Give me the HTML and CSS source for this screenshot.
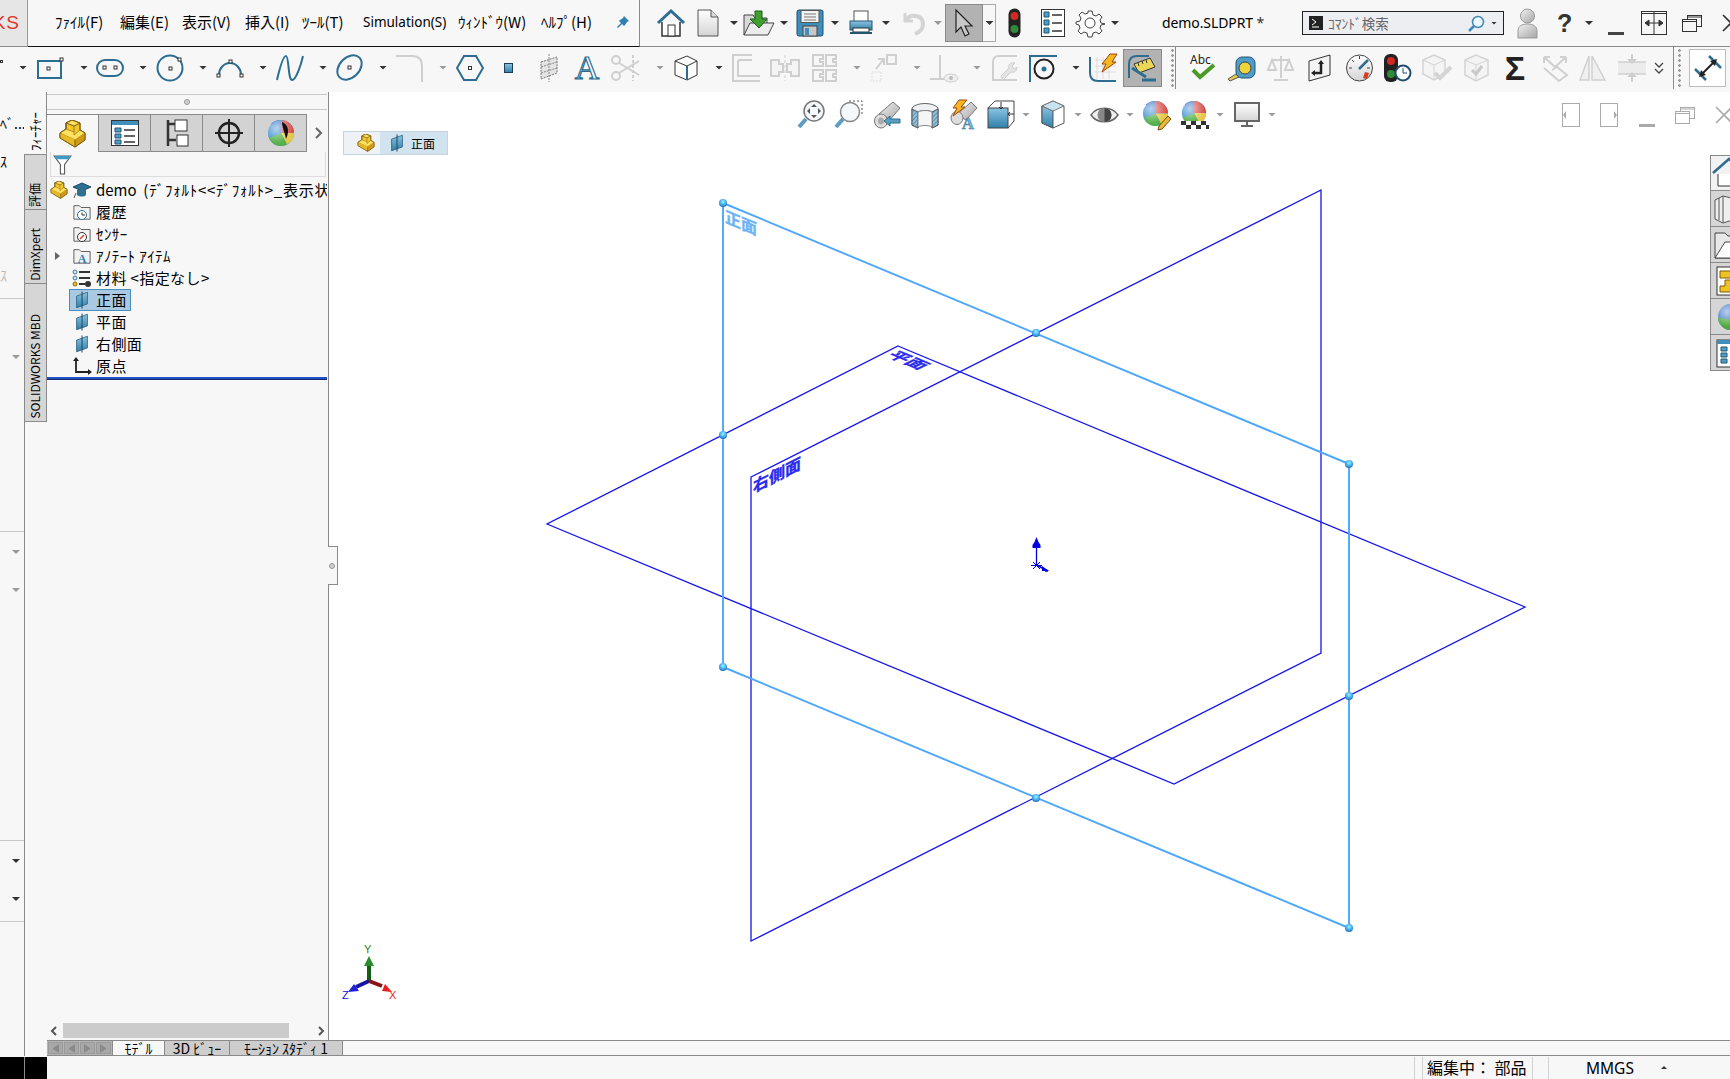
FILE: index.html
```html
<!DOCTYPE html>
<html lang="ja">
<head>
<meta charset="utf-8">
<title>demo.SLDPRT</title>
<link rel="stylesheet" href="styles.css">
</head>
<body>
<svg class="defs" width="0" height="0" aria-hidden="true">
  <defs>
    <linearGradient id="gBlue" x1="0" y1="0" x2="0" y2="1"><stop offset="0" stop-color="#8cc4e4"/><stop offset="1" stop-color="#2f7fa8"/></linearGradient>
    <linearGradient id="gFace" x1="0" y1="0" x2="0" y2="1"><stop offset="0" stop-color="#ffffff"/><stop offset="1" stop-color="#d4d4d4"/></linearGradient>
    <linearGradient id="gMetal" x1="0" y1="0" x2="1" y2="1"><stop offset="0" stop-color="#f2f2f2"/><stop offset="1" stop-color="#a5a5a5"/></linearGradient>
    <radialGradient id="gDot" cx=".5" cy=".35" r=".7"><stop offset="0" stop-color="#9ff0ff"/><stop offset=".6" stop-color="#3aa6ea"/><stop offset="1" stop-color="#1b5f9c"/></radialGradient>
    <radialGradient id="gShine" cx=".35" cy=".3" r=".6"><stop offset="0" stop-color="#fff" stop-opacity=".65"/><stop offset="1" stop-color="#fff" stop-opacity="0"/></radialGradient>
    <pattern id="hatch" width="3" height="3" patternUnits="userSpaceOnUse" patternTransform="rotate(45)"><rect width="3" height="3" fill="#8fc0da"/><path d="M0 0v3" stroke="#2d6d92"/></pattern>
    <symbol id="part" viewBox="0 0 27 28">
      <path d="M1 13 7 9V3l6-3 8 3v7l5 3v7l-10 7L1 18Z" fill="#f3c62b" stroke="#7d5f10"/>
      <path d="M7 3l6-3 8 3-6 3Z" fill="#ffe060" stroke="#7d5f10" stroke-width=".6"/>
      <path d="M1 13l6-4 8 3v3l6-5 5 3-10 7Z" fill="#ffe060" stroke="#7d5f10" stroke-width=".6"/>
      <path d="M1 13l15 7v7L1 18Z" fill="#e9b825"/>
      <path d="M16 20l10-7v7l-10 7Z" fill="#d09a18"/>
      <path d="M7 9V3l8 3v6M15 6l6-3" fill="none" stroke="#7d5f10" stroke-width=".7"/>
      <path d="M1 13 7 9V3l6-3 8 3v7l5 3v7l-10 7L1 18ZM16 20v7" fill="none" stroke="#7d5f10"/>
    </symbol>
    <symbol id="plane" viewBox="0 0 18 22">
      <path d="M2 6 16 1v15L2 21Z" fill="url(#gBlue)" stroke="#2a5f7e"/>
      <path d="M9 0v22" stroke="#1d3d50" stroke-width="1.2"/>
    </symbol>
    <symbol id="folder" viewBox="0 0 20 20">
      <path d="M1 18V3h6l2 2h10v13Z" fill="#f2f2f2" stroke="#555"/>
    </symbol>
    <symbol id="ball" viewBox="0 0 28 28">
      <circle cx="14" cy="14" r="13" fill="#3f8fd0"/>
      <path d="M14 14 4 5A13 13 0 0 1 14 1Z" fill="#3c78c8"/>
      <path d="M14 14V1A13 13 0 0 1 27 14Z" fill="#d8504a"/>
      <path d="M14 14H27A13 13 0 0 1 20 25.5Z" fill="#e6c84a"/>
      <path d="M14 14 20 25.5A13 13 0 0 1 2 19Z" fill="#55b04a"/>
      <circle cx="14" cy="14" r="13" fill="url(#gShine)"/>
    </symbol>
  </defs>
</svg>

<div class="top">
  <div class="logo"><span class="logo-t">KS</span></div>
  <nav class="menu">
    <span class="mi">ﾌｧｲﾙ(F)</span><span class="mi">編集(E)</span><span class="mi">表示(V)</span><span class="mi">挿入(I)</span><span class="mi">ﾂｰﾙ(T)</span><span class="mi mi-s">Simulation(S)</span><span class="mi">ｳｨﾝﾄﾞｳ(W)</span><span class="mi">ﾍﾙﾌﾟ(H)</span>
    <svg class="pin" width="14" height="14" viewBox="0 0 14 14"><path d="M8 1l5 5-2 1-2 3-1 1-2-2-4 4-1-1 4-4-2-2 1-1 3-2Z" fill="#2f7fb5"/></svg>
  </nav>
  <div class="tools t1">
    <svg class="i m17" width="28" height="28" viewBox="0 0 28 28"><path d="M5 13v14h18V13" fill="#fff" stroke="#333" stroke-width="1.5"/><rect x="11" y="16" width="7" height="11" fill="#fff" stroke="#333"/><path d="M1 14 14 2l13 12" fill="none" stroke="#2d6d92" stroke-width="3"/></svg>
    <svg class="i m12" width="22" height="28" viewBox="0 0 22 28"><path d="M1 1h13l7 7v19H1Z" fill="url(#gFace)" stroke="#555"/><path d="M14 1v7h7" fill="#ddd" stroke="#555"/></svg>
    <i class="c m10"></i>
    <svg class="i m4" width="32" height="28" viewBox="0 0 32 28"><path d="M1 26V6h9l2 3h12v5" fill="#d9d9d9" stroke="#444"/><path d="M1 26 7 14h24l-6 12Z" fill="#ececec" stroke="#444"/><path d="M12 2h7v8h5l-8 9-9-9h5Z" fill="#3fa02f" stroke="#1f5e16"/></svg>
    <i class="c m4"></i>
    <svg class="i m7" width="28" height="28" viewBox="0 0 28 28"><rect x="1" y="1" width="26" height="26" rx="2" fill="#3f8fbd" stroke="#1f4f6e"/><rect x="5" y="1.500" width="18" height="12" fill="#f4f4f4" stroke="#555"/><path d="M8 5h12M8 8h12M8 11h12" stroke="#777"/><rect x="7" y="17" width="14" height="10" fill="#c8c8c8" stroke="#444"/><rect x="9" y="19" width="4" height="7" fill="#3f8fbd"/></svg>
    <i class="c m6"></i>
    <svg class="i m9" width="24" height="28" viewBox="0 0 24 28"><rect x="5" y="2" width="14" height="11" fill="#fff" stroke="#555"/><rect x="1" y="12" width="22" height="9" fill="url(#gBlue)" stroke="#23566f"/><rect x="4" y="19" width="16" height="4" fill="#fff" stroke="#333"/><path d="M1 24h22" stroke="#23566f" stroke-width="2"/></svg>
    <i class="c m8"></i>
    <svg class="i m8" width="26" height="28" viewBox="0 0 26 28"><path d="M6 4v8h8" fill="none" stroke="#d4d4d4" stroke-width="3"/><path d="M7 11C12 4 24 6 24 15c0 5-3 8-8 10" fill="none" stroke="#d4d4d4" stroke-width="4"/></svg>
    <i class="c cg m8"></i>
    <div class="sel-tool m2">
      <div class="sel-main"><svg width="24" height="34" viewBox="0 0 24 34"><path d="M4 4v22l5-5 4 9 4-2-4-8h7Z" fill="#c8c8c8" stroke="#222" stroke-width="1.2"/></svg></div>
      <div class="sel-drop"><i class="c"></i></div>
    </div>
    <svg class="i m12" width="13" height="30" viewBox="0 0 13 30"><rect x=".5" y=".5" width="12" height="29" rx="6" fill="#222"/><circle cx="6.500" cy="8" r="4" fill="#d02a22"/><circle cx="6.500" cy="21" r="4" fill="#2f8a3a"/></svg>
    <svg class="i m20" width="24" height="28" viewBox="0 0 24 28"><rect x=".5" y=".5" width="23" height="27" fill="#fff" stroke="#333"/><path d="M3 3h5v5H3ZM3 11h5v5H3ZM3 19h5v5H3Z" fill="#4d9cc9" stroke="#23566f"/><path d="M11 6h10M11 14h10M11 22h10" stroke="#333" stroke-width="1.500"/></svg>
    <svg class="i m11" width="28" height="28" viewBox="0 0 28 28"><path d="M12 2h4l1 4 3 1 3-2 3 3-2 3 1 3 4 1v0l-4 1-1 3 2 3-3 3-3-2-3 1-1 4h-4l-1-4-3-1-3 2-3-3 2-3-1-3-3-1v-2l4-1 1-3-2-3 3-3 3 2 3-1Z" fill="#fafafa" stroke="#444"/><circle cx="14" cy="14" r="5" fill="#fff" stroke="#444"/></svg>
    <i class="c m6"></i>
    <span class="doc">demo.SLDPRT <span class="star">*</span></span>
    <div class="search">
      <svg width="14" height="14" viewBox="0 0 14 14"><rect width="14" height="14" fill="#222"/><path d="M3 3l4 3-4 3M3 11h7" stroke="#fff" fill="none"/></svg>
      <span class="search-t">ｺﾏﾝﾄﾞ検索</span>
      <svg class="sr-g" width="17" height="17" viewBox="0 0 17 17"><circle cx="10" cy="7" r="5.500" fill="#eef8ff" stroke="#3e8bb8" stroke-width="1.500"/><path d="M6 11l-5 5" stroke="#3e8bb8" stroke-width="2.500"/></svg>
      <i class="c cs"></i>
    </div>
    <svg class="i m13" width="21" height="31" viewBox="0 0 21 31"><circle cx="10.500" cy="8" r="7" fill="url(#gMetal)" stroke="#999"/><path d="M1 30v-7c0-5 4-7 9.500-7S20 18 20 23v7Z" fill="url(#gMetal)" stroke="#999"/></svg>
    <span class="help">?</span>
    <i class="c m13"></i>
    <span class="bar16 m14"></span>
    <svg class="i m17" width="26" height="24" viewBox="0 0 26 24"><rect x=".5" y=".5" width="25" height="23" fill="none" stroke="#333"/><path d="M.5 2.500h25" stroke="#333"/><path d="M13 1v22" stroke="#333"/><path d="M8 12l0 0M5 12h16M8 9l-4 3 4 3ZM18 9l4 3-4 3Z" stroke="#333" fill="#333"/></svg>
    <svg class="i m15" width="20" height="18" viewBox="0 0 20 18"><rect x="5.500" y="1.500" width="14" height="11" fill="none" stroke="#333"/><rect x=".5" y="5.500" width="14" height="12" fill="#f7f7f7" stroke="#333"/><path d="M.5 7.500h14M5.500 3h14" stroke="#333"/></svg>
    <svg class="i m20" width="18" height="18" viewBox="0 0 18 18"><path d="M1 1l16 16M17 1 1 17" stroke="#333" stroke-width="1.600"/></svg>
  </div>
</div>

<div class="tools t2">
  <span class="hnd"></span>
  <i class="c m15"></i>
  <svg class="i m9" width="27" height="22" viewBox="0 0 27 22"><rect x="1" y="4" width="23" height="17" fill="none" stroke="#2d6d92" stroke-width="2"/><rect x="10" y="10" width="3" height="3" class="h"/><rect x="23" y="1" width="3" height="3" class="h"/></svg>
  <i class="c m15"></i>
  <svg class="i m7" width="28" height="20" viewBox="0 0 28 20"><rect x="1" y="2" width="26" height="16" rx="8" fill="none" stroke="#2d6d92" stroke-width="2"/><rect x="7" y="8" width="3" height="3" class="h"/><rect x="18" y="8" width="3" height="3" class="h"/></svg>
  <i class="c m14"></i>
  <svg class="i m8" width="28" height="28" viewBox="0 0 28 28"><ellipse cx="14" cy="14" rx="12.500" ry="12.500" fill="none" stroke="#2d6d92" stroke-width="2"/><rect x="13" y="13" width="3" height="3" class="h"/><rect x="22" y="4" width="3" height="3" class="h"/></svg>
  <i class="c m14"></i>
  <svg class="i m8" width="28" height="22" viewBox="0 0 28 22"><path d="M3 18A11 12 0 0 1 25 18" fill="none" stroke="#2d6d92" stroke-width="2"/><rect x="13" y="3" width="3" height="3" class="h"/><rect x="1" y="17" width="3" height="3" class="h"/><rect x="24" y="17" width="3" height="3" class="h"/></svg>
  <i class="c m14"></i>
  <svg class="i m8" width="28" height="26" viewBox="0 0 28 26"><path d="M1 25C4 12 7 1 10 1s2 24 6 24S25 10 27 1" fill="none" stroke="#2d6d92" stroke-width="2"/></svg>
  <i class="c m14"></i>
  <svg class="i m8" width="27" height="27" viewBox="0 0 27 27"><ellipse cx="13.500" cy="13.500" rx="14" ry="10" transform="rotate(-45 13.500 13.500)" fill="none" stroke="#2d6d92" stroke-width="2"/><rect x="12" y="12" width="3" height="3" class="h"/></svg>
  <i class="c m15"></i>
  <svg class="i m8" width="28" height="28" viewBox="0 0 28 28"><path d="M0 2h16q10 0 10 10v16" fill="none" stroke="#cfcfcf" stroke-width="2"/></svg>
  <i class="c cg m14"></i>
  <svg class="i m8" width="28" height="26" viewBox="0 0 28 26"><path d="M1 13 8 1h12l7 12-7 12H8Z" fill="none" stroke="#2d6d92" stroke-width="2"/><rect x="12.500" y="11.500" width="3" height="3" class="h"/></svg>
  <svg class="i m20" width="9" height="10" viewBox="0 0 9 10"><rect x=".5" y=".5" width="8" height="9" fill="url(#gBlue)" stroke="#1e3e52"/></svg>
  <svg class="i m27" width="18" height="28" viewBox="0 0 18 28"><path d="M1 8 17 3v16L1 25Z" fill="#e4e4e4" stroke="#777" stroke-dasharray="2 1"/><path d="M9 0v28M1 13l16-5M1 19l16-5" stroke="#888" stroke-dasharray="2 1"/></svg>
  <svg class="i m15" width="28" height="28" viewBox="0 0 28 28"><text class="bigA" x="14" y="25" text-anchor="middle">A</text></svg>
  <svg class="i m10" width="28" height="28" viewBox="0 0 28 28"><g fill="none" stroke="#cfcfcf" stroke-width="2"><circle cx="5" cy="6" r="4"/><circle cx="5" cy="22" r="4"/><path d="M8 9l20 12M8 19 28 7"/><path d="M22 1v26" stroke-dasharray="3 2"/></g></svg>
  <i class="c cg m16"></i>
  <svg class="i m9" width="24" height="26" viewBox="0 0 24 26"><path d="M1 6 13 1l10 5v14l-10 5L1 20Z" fill="#fff" stroke="#333"/><path d="M1 6l12 5 10-5" fill="none" stroke="#333"/><path d="M13 11v14" stroke="#2d6d92" stroke-width="2"/></svg>
  <i class="c m16"></i>
  <svg class="i m8" width="28" height="28" viewBox="0 0 28 28"><g fill="none" stroke="#cfcfcf" stroke-width="2"><path d="M20 1H1v26h27"/><path d="M20 6H8q-2 0-2 2v14h22"/></g></svg>
  <svg class="i m10" width="30" height="26" viewBox="0 0 30 26"><g fill="#f4f4f4" stroke="#cfcfcf" stroke-width="2"><path d="M1 5h8v4h4v8H9v4H1Z"/><path d="M29 5h-8v4h-4v8h4v4h8Z"/></g><path d="M15 0v26" stroke="#cfcfcf" stroke-dasharray="3 2"/></svg>
  <svg class="i m12" width="25" height="28" viewBox="0 0 25 28"><g fill="none" stroke="#cfcfcf" stroke-width="2"><path d="M1 1h10v4h-3v3h3v4H1Z"/><path d="M14 1h10v4h-3v3h3v4H14Z"/><path d="M1 16h10v4H8v3h3v4H1Z"/><path d="M14 16h10v4h-3v3h3v4H14Z"/></g></svg>
  <i class="c cg m15"></i>
  <svg class="i m9" width="26" height="28" viewBox="0 0 26 28"><rect x="16" y="1" width="9" height="9" fill="none" stroke="#cfcfcf" stroke-width="2"/><rect x="1" y="18" width="9" height="9" fill="none" stroke="#ddd" stroke-dasharray="2 1"/><path d="M5 15 12 6M7 5h6v6" fill="none" stroke="#cfcfcf" stroke-width="2"/></svg>
  <i class="c cg m15"></i>
  <svg class="i m8" width="28" height="28" viewBox="0 0 28 28"><path d="M10 1v24M0 25h28" stroke="#cfcfcf" stroke-width="2"/><ellipse cx="21" cy="24" rx="7" ry="4" fill="#eee" stroke="#cfcfcf"/><circle cx="21" cy="24" r="2" fill="#bbb"/></svg>
  <i class="c cg m14"></i>
  <svg class="i m9" width="26" height="28" viewBox="0 0 26 28"><path d="M26 2H8Q2 2 2 8v18h24" fill="none" stroke="#cfcfcf" stroke-width="2"/><path d="M10 22l8-8c-1-4 2-6 6-5l-3 3 2 3 3-2c0 4-3 6-6 5l-8 8Z" fill="#e4e4e4" stroke="#cfcfcf"/></svg>
  <svg class="i m12" width="28" height="28" viewBox="0 0 28 28"><path d="M1 28V2h27" fill="none" stroke="#2d6d92" stroke-width="2"/><circle cx="15" cy="15" r="9.500" fill="none" stroke="#222" stroke-width="2"/><circle cx="15" cy="15" r="2.500" fill="#2d6d92"/></svg>
  <i class="c m14"></i>
  <svg class="i m8" width="28" height="28" viewBox="0 0 28 28"><path d="M1 3v16q0 8 8 8h18" fill="none" stroke="#2d6d92" stroke-width="2"/><path d="M6 6h21M6 12h21M6 18h21M8 3v22M14 3v22M20 3v22" stroke="#dcdcdc"/><path d="M21 0h7l-5 8h4L13 18l4-8h-4Z" fill="#f5b81e" stroke="#a04010"/></svg>
  <div class="act m6"><svg width="30" height="28" viewBox="0 0 30 28"><path d="M1 24V10Q1 2 9 2h12" fill="none" stroke="#2d6d92" stroke-width="2"/><path d="M6 10 22 4l5 9-16 6Z" fill="#ecd75a" stroke="#333"/><path d="M10 9l1 3M14 7l1 3M18 6l1 3" stroke="#333"/><path d="M4 14l14 9M14 26h14" stroke="#2d6d92" stroke-width="3"/></svg></div>
  <span class="grip m8"></span>
  <span class="vsep"></span>
  <svg class="i m14" width="26" height="26" viewBox="0 0 26 26"><text class="abc" x="0" y="9">Abc</text><path d="M3 15l7 7L24 10" fill="none" stroke="#4a9a25" stroke-width="4"/></svg>
  <svg class="i m12" width="28" height="28" viewBox="0 0 28 28"><path d="M0 25l8-5 3 3-9 4Z" fill="#e8c84a" stroke="#555"/><rect x="8" y="3" width="19" height="21" rx="6" fill="#4d9cc9" stroke="#23566f"/><circle cx="17" cy="14" r="6" fill="#f1d33a" stroke="#444"/></svg>
  <svg class="i m11" width="27" height="28" viewBox="0 0 27 28"><g fill="none" stroke="#d0d0d0" stroke-width="2"><path d="M14 2v22M5 6h18M5 6 1 16h8ZM22 6l-4 10h8Z"/><path d="M7 26h14"/></g></svg>
  <svg class="i m14" width="23" height="28" viewBox="0 0 23 28"><path d="M1 7 22 1v20L1 27Z" fill="#f4f4f4" stroke="#333"/><path d="M7 19h6V9" fill="none" stroke="#222" stroke-width="2.500"/><path d="M10 10l3-4 3 4Z" fill="#222"/><path d="M7 16v6l-4-3Z" fill="#222"/></svg>
  <svg class="i m15" width="27" height="28" viewBox="0 0 27 28"><circle cx="13.500" cy="14" r="13" fill="url(#gFace)" stroke="#444"/><path d="M13.500 2v3M3 14h3M24 14h-3M6 6l2 2M21 6l-2 2" stroke="#444"/><path d="M13 15l9-9" stroke="#2d6d92" stroke-width="2.500"/><path d="M19 18l4 1-2 6-4-1Z" fill="#d83a20"/></svg>
  <svg class="i m11" width="27" height="28" viewBox="0 0 27 28"><rect x="0" y="0" width="14" height="28" rx="6" fill="#222"/><circle cx="7" cy="7" r="4" fill="#d02a22"/><circle cx="7" cy="20" r="4" fill="#2f8a3a"/><circle cx="19" cy="19" r="7.500" fill="#fff" stroke="#1f4f6e" stroke-width="2"/><path d="M19 14v5h4" fill="none" stroke="#1f4f6e"/></svg>
  <svg class="i m11" width="30" height="28" viewBox="0 0 30 28"><path d="M1 6 12 1l11 5v14l-11 6L1 20Z" fill="#f4f4f4" stroke="#d4d4d4" stroke-width="1.500"/><path d="M1 6l11 5 11-5M12 11v15" fill="none" stroke="#d4d4d4"/><path d="M13 19l5 5 11-11" fill="none" stroke="#d4d4d4" stroke-width="4"/></svg>
  <svg class="i m12" width="25" height="28" viewBox="0 0 25 28"><path d="M1 6 12 1l12 5v15l-12 6L1 21Z" fill="#f4f4f4" stroke="#d4d4d4" stroke-width="1.500"/><path d="M1 6l11 5 12-5M12 11v15" fill="none" stroke="#d4d4d4"/><path d="M8 16l4 4 6-8" fill="none" stroke="#c8c8c8" stroke-width="3"/></svg>
  <svg class="i m14" width="24" height="28" viewBox="0 0 24 28"><text class="sigma" x="12" y="26" text-anchor="middle">Σ</text></svg>
  <svg class="i m14" width="27" height="28" viewBox="0 0 27 28"><g fill="none" stroke="#d0d0d0" stroke-width="2"><path d="M3 14 18 27l8-6-10-8-5 3"/><path d="M14 13 3 3M14 13 25 3M3 3h6M3 3v6M25 3h-6M25 3v6"/></g></svg>
  <svg class="i m11" width="27" height="28" viewBox="0 0 27 28"><g fill="#f0f0f0" stroke="#d0d0d0" stroke-width="1.500"><path d="M1 26 10 2v24Z"/><path d="M13 2l13 24H13Z"/></g></svg>
  <svg class="i m12" width="28" height="28" viewBox="0 0 28 28"><path d="M0 14h28" stroke="#ececec" stroke-width="10"/><path d="M0 8h28M0 20h28" stroke="#d8d8d8" stroke-width="2"/><path d="M14 0v7M14 21v7" stroke="#cfcfcf" stroke-width="2"/><path d="M9 5h10l-5 5ZM9 23h10l-5-5Z" fill="#cfcfcf"/></svg>
  <svg class="i m8" width="10" height="12" viewBox="0 0 10 12"><path d="M1 1l4 4 4-4M1 7l4 4 4-4" fill="none" stroke="#444" stroke-width="1.300"/></svg>
  <span class="vsep m9"></span>
  <span class="grip m3"></span>
  <div class="act2 m7"><svg width="28" height="28" viewBox="0 0 28 28"><path d="M1 15 12 26" stroke="#2d6d92" stroke-width="2.500"/><path d="M15 2 27 14" stroke="#2d6d92" stroke-width="2.500"/><path d="M8 20 20 8" stroke="#222" stroke-width="2"/><path d="M5 23l2-7 5 5ZM23 5l-7 2 5 5Z" fill="#222"/></svg></div>
</div>

<div class="main">
  <aside class="strip">
    <span class="st-a">ﾍﾞ...</span>
    <span class="st-b">ｽ</span>
    <span class="st-c">ｽ</span>
    <span class="st-l st-l1"></span>
    <i class="c cg st-k1"></i>
    <span class="st-l st-l2"></span>
    <i class="c cg st-k2"></i>
    <i class="c cg st-k3"></i>
    <span class="st-l st-l3"></span>
    <i class="c st-k4"></i>
    <i class="c st-k5"></i>
    <span class="st-l st-l4"></span>
  </aside>
  <div class="vcol">
    <div class="vt vt-a"><span>ﾌｨｰﾁｬｰ</span></div>
    <div class="vt vt-b"><span>評価</span></div>
    <div class="vt vt-c"><span>DimXpert</span></div>
    <div class="vt vt-d"><span>SOLIDWORKS MBD</span></div>
    <div class="vfill"></div>
  </div>
  <section class="panel">
    <div class="pgrip"><span class="dot"></span></div>
    <div class="ptabs">
      <div class="ptab on"><svg width="27" height="28"><use href="#part"/></svg></div>
      <div class="ptab"><svg width="28" height="26" viewBox="0 0 28 26"><rect x=".5" y=".5" width="27" height="25" fill="#fff" stroke="#333"/><rect x="1" y="1" width="26" height="4" fill="#3f8fbd"/><path d="M4 8h6v4H4ZM4 14h6v4H4ZM4 20h6v4H4Z" fill="#4d9cc9" stroke="#23566f"/><path d="M13 10h11M13 16h11M13 22h11" stroke="#333" stroke-width="1.500"/></svg></div>
      <div class="ptab"><svg width="24" height="28" viewBox="0 0 24 28"><path d="M3 1v26M3 5h8M3 21h8" stroke="#333" stroke-width="2.500"/><rect x="10" y="1" width="12" height="11" fill="#fff" stroke="#333"/><rect x="12" y="16" width="11" height="11" fill="#fff" stroke="#333"/></svg></div>
      <div class="ptab"><svg width="28" height="28" viewBox="0 0 28 28"><circle cx="14" cy="14" r="10" fill="none" stroke="#222" stroke-width="2.500"/><path d="M14 0v28M0 14h28" stroke="#222" stroke-width="2"/></svg></div>
      <div class="ptab"><svg width="28" height="28"><use href="#ball"/><path d="M15 3c6 2 8 9 4 17-1-6-4-12-4-17Z" fill="#111"/></svg></div>
      <svg class="pmore" width="8" height="12" viewBox="0 0 8 12"><path d="M1 1l5 5-5 5" fill="none" stroke="#666" stroke-width="2"/></svg>
    </div>
    <div class="pfilter"><svg width="19" height="21" viewBox="0 0 18 20"><path d="M1 2h16L11 10v9H7v-9Z" fill="#fff" stroke="#555"/><path d="M1 2h16l-2 3H3Z" fill="#3f9ac6"/></svg></div>
    <div class="tree">
      <div class="row"><span class="tw"><svg class="tw-part" width="18" height="18"><use href="#part"/></svg></span><span class="rb"><svg width="20" height="18" viewBox="0 0 20 18"><path d="M1 6 10 2l9 4-9 4Z" fill="#2f6f90" stroke="#1d4a60"/><path d="M5 9v5c3 2 7 2 9 0V8" fill="#2f6f90"/><path d="M4 12 2 17" stroke="#555"/></svg><span class="rt rt-d">demo&nbsp; <span class="rt-cfg">(ﾃﾞﾌｫﾙﾄ&lt;&lt;ﾃﾞﾌｫﾙﾄ&gt;_表示状態-1&gt;)</span></span></span></div>
      <div class="row"><span class="tw"></span><span class="rb"><svg width="20" height="18"><use href="#folder"/><circle cx="10" cy="12" r="4.500" fill="#fff" stroke="#2f6f90"/><path d="M10 9.500V12h3" fill="none" stroke="#333"/></svg><span class="rt">履歴</span></span></div>
      <div class="row"><span class="tw"></span><span class="rb"><svg width="20" height="18"><use href="#folder"/><circle cx="10" cy="12" r="4.500" fill="#fff" stroke="#333"/><path d="M8 14l4-4" stroke="#d83a20" stroke-width="1.500"/></svg><span class="rt">ｾﾝｻｰ</span></span></div>
      <div class="row"><span class="tw"><i class="twa"></i></span><span class="rb"><svg width="20" height="18"><use href="#folder"/><text class="fa" x="10" y="16" text-anchor="middle">A</text></svg><span class="rt">ｱﾉﾃｰﾄ ｱｲﾃﾑ</span></span></div>
      <div class="row"><span class="tw"></span><span class="rb"><svg width="20" height="18" viewBox="0 0 20 18"><circle cx="3" cy="3" r="2" fill="#d8e6ee" stroke="#3e7c9e"/><circle cx="3" cy="9" r="2" fill="#d8e6ee" stroke="#3e7c9e"/><circle cx="3" cy="15" r="2" fill="#eec21f" stroke="#8a6a10"/><path d="M7 3h11M7 9h11M7 15h6" stroke="#333" stroke-width="2"/><circle cx="16" cy="15" r="3" fill="#333"/></svg><span class="rt">材料 &lt;指定なし&gt;</span></span></div>
      <div class="row"><span class="tw"></span><span class="rb sel"><svg width="20" height="18" viewBox="-3 0 20 18"><use href="#plane" width="14" height="18"/></svg><span class="rt">正面</span></span></div>
      <div class="row"><span class="tw"></span><span class="rb"><svg width="20" height="18" viewBox="-3 0 20 18"><use href="#plane" width="14" height="18"/></svg><span class="rt">平面</span></span></div>
      <div class="row"><span class="tw"></span><span class="rb"><svg width="20" height="18" viewBox="-3 0 20 18"><use href="#plane" width="14" height="18"/></svg><span class="rt">右側面</span></span></div>
      <div class="row"><span class="tw"></span><span class="rb"><svg width="20" height="18" viewBox="0 0 20 18"><path d="M4 3v12h13" fill="none" stroke="#222" stroke-width="1.800"/><path d="M4 0 1 4h6ZM20 15l-4-3v6Z" fill="#222"/></svg><span class="rt">原点</span></span></div>
      <div class="rollback"></div>
    </div>
    <div class="hscroll">
      <svg width="8" height="10" viewBox="0 0 8 10"><path d="M6 1 2 5l4 4" fill="none" stroke="#555" stroke-width="2"/></svg>
      <div class="thumb"></div>
      <svg width="8" height="10" viewBox="0 0 8 10"><path d="M2 1l4 4-4 4" fill="none" stroke="#555" stroke-width="2"/></svg>
    </div>
    <div class="phandle"><span class="dot"></span></div>
  </section>

  <section class="view">
    <svg class="model" viewBox="329 92 1401 948" width="1401" height="948">
      <g fill="none" stroke="#1414ee" stroke-width="1.300">
        <polygon points="898,346 1525,607 1174,784 547,524"/>
        <polygon points="751,477 1321,190 1321,653 751,941"/>
      </g>
      <polygon points="723,203 1349,464 1349,928 723,667" fill="none" stroke="#4da6ff" stroke-width="1.900"/>
      <text class="pl pl-f" transform="matrix(1 .417 0 1 725 222)">正面</text>
      <text class="pl pl-t" transform="matrix(1 .417 -.9 .45 886 356)">平面</text>
      <text class="pl pl-r" transform="matrix(1 -.507 0 1 753 493)">右側面</text>
      <g fill="url(#gDot)">
        <circle cx="723" cy="203" r="4"/><circle cx="1349" cy="464" r="4"/><circle cx="1349" cy="928" r="4"/><circle cx="723" cy="667" r="4"/>
        <circle cx="1036" cy="333" r="4"/><circle cx="1349" cy="696" r="4"/><circle cx="1036" cy="798" r="4"/><circle cx="723" cy="435" r="4"/>
      </g>
      <g class="org">
        <path d="M1036.500 540v25" stroke="#0000e6" stroke-width="1.300"/>
        <path d="M1036.500 537l-2 5-2 3v3h8v-3l-2-3Z" fill="#0000e6"/>
        <path d="M1037 565l5 3 6 3h-3" stroke="#0000e6" stroke-width="1.500" fill="none"/>
        <path d="M1042 566l7 5h-7Z" fill="#0000e6"/>
        <path d="M1033 562l7 7M1040 562l-7 7M1031 565.500h11" stroke="#0000e6"/>
      </g>
      <g class="triad">
        <path d="M369 981v-17" stroke="#145f14" stroke-width="4"/>
        <path d="M369 956l-5 10h10Z" fill="#2d8a2d"/>
        <path d="M369 981l-13 6" stroke="#1616a0" stroke-width="4"/>
        <path d="M348 992l6-8 5 7Z" fill="#2020d8"/>
        <path d="M369 981l13 5" stroke="#8a1414" stroke-width="4"/>
        <path d="M392 992l-10-1 3-7Z" fill="#e82020"/>
        <text class="ax ax-y" x="364" y="953">Y</text>
        <text class="ax ax-z" x="342" y="999">Z</text>
        <text class="ax ax-x" x="389" y="999">X</text>
      </g>
    </svg>

    <div class="vbar">
      <svg class="i" width="27" height="29" viewBox="0 0 27 29"><circle cx="16" cy="11" r="10" fill="#f4f8fb" stroke="#777" stroke-width="1.500"/><path d="M8 19 1 27" stroke="#5d9dc0" stroke-width="4"/><path d="M16 4l-3 3h6ZM16 18l-3-3h6ZM9 11l3-3v6ZM23 11l-3-3v6Z" fill="#555"/></svg>
      <svg class="i m10" width="28" height="29" viewBox="0 0 28 29"><path d="M14 1h13v13" fill="none" stroke="#555" stroke-dasharray="2 2"/><circle cx="15" cy="12" r="9.500" fill="#f4f8fb" stroke="#888" stroke-width="1.500"/><path d="M8 19 1 27" stroke="#5d9dc0" stroke-width="4"/></svg>
      <svg class="i m10" width="28" height="29" viewBox="0 0 28 29"><path d="M6 14 20 2l7 6-12 14Z" fill="url(#gMetal)" stroke="#777"/><ellipse cx="8" cy="21" rx="6.500" ry="7" fill="#ddd" stroke="#777"/><ellipse cx="8" cy="21" rx="3" ry="3.500" fill="#aaa"/><path d="M27 19H17v-3l-6 5 6 5v-3h10Z" fill="#5d9dc0" stroke="#2d6d92"/></svg>
      <svg class="i m10" width="28" height="29" viewBox="0 0 28 29"><path d="M1 8C5 2 23 2 27 8v17l-6 3V12c-3-2-11-2-14 0v16l-6-3Z" fill="#eef2f5" stroke="#666"/><path d="M1 9l6 3v16l-6-3ZM21 12l6-3v16l-6 3Z" fill="url(#hatch)" stroke="#555"/><path d="M7 12c3-2 11-2 14 0v15c-3-2-11-2-14 0Z" fill="#f6f6f6" stroke="#888"/></svg>
      <svg class="i m10" width="28" height="29" viewBox="0 0 28 29"><path d="M8 15 22 2l6 6-11 12Z" fill="url(#gMetal)" stroke="#777"/><ellipse cx="8" cy="18" rx="6" ry="6.500" fill="#ddd" stroke="#777"/><path d="M10 0h8l-6 7h4L4 16l4-8H4Z" fill="#f5b81e" stroke="#a04010"/><text class="vA" x="19" y="29" text-anchor="middle">A</text></svg>
      <svg class="i m10" width="28" height="29" viewBox="0 0 28 29"><path d="M1 8 8 1h19v20l-6 7" fill="#fff" stroke="#444"/><rect x="1" y="8" width="20" height="20" fill="url(#gBlue)" stroke="#444"/><path d="M14 2v7l-2-2M14 9l2-2M27 14h-6M21 14l2-2M21 14l2 2" fill="none" stroke="#333"/></svg>
      <i class="c cg m6"></i>
      <svg class="i m10" width="24" height="29" viewBox="0 0 24 29"><path d="M1 6 12 1l11 5v17l-11 5L1 23Z" fill="#fff" stroke="#555"/><path d="M1 6l11 5v17L1 23Z" fill="url(#gBlue)" stroke="#555"/><path d="M1 6l11 5 11-5-11-5Z" fill="#c8e4f2" stroke="#777"/></svg>
      <i class="c cg m8"></i>
      <svg class="i m7" width="29" height="22" viewBox="0 0 29 22"><path d="M1 11C7 2 22 2 28 11 22 20 7 20 1 11Z" fill="#eee" stroke="#666" stroke-width="1.500"/><circle cx="14.500" cy="11" r="7" fill="#888"/><path d="M14.500 4v14a7 7 0 0 0 0-14Z" fill="#444"/></svg>
      <i class="c cg m6"></i>
      <svg class="i m7" width="30" height="30" viewBox="0 0 30 30"><use href="#ball" width="27" height="27"/><path d="M17 26l9-10 3 3-9 10-4 1Z" fill="#e8b83a" stroke="#7a4a10"/></svg>
      <svg class="i m9" width="28" height="30" viewBox="0 0 28 30"><use href="#ball" width="26" height="26"/><path d="M0 21h28v9H0Z" fill="#fff"/><path d="M0 21h5v4H0ZM10 21h5v4h-5ZM20 21h5v4h-5ZM5 25h5v4H5ZM15 25h5v4h-5ZM25 25h3v4h-3Z" fill="#333"/></svg>
      <i class="c cg m6"></i>
      <svg class="i m9" width="26" height="26" viewBox="0 0 26 26"><rect x="1" y="1" width="24" height="18" fill="url(#gFace)" stroke="#666" stroke-width="2"/><path d="M13 19v4M7 24h12" stroke="#666" stroke-width="2"/></svg>
      <i class="c cg m7"></i>
      <div class="wbtns">
        <svg class="i" width="18" height="24" viewBox="0 0 18 24"><rect x=".5" y=".5" width="17" height="23" fill="none" stroke="#aaa"/><path d="M4 8v8l-3-4Z" fill="#aaa"/></svg>
        <svg class="i m20" width="18" height="24" viewBox="0 0 18 24"><rect x=".5" y=".5" width="17" height="23" fill="none" stroke="#aaa"/><path d="M14 8v8l3-4Z" fill="#aaa"/></svg>
        <span class="bar16 bar-g m21"></span>
        <svg class="i m20" width="20" height="18" viewBox="0 0 20 18"><rect x="5.500" y="1.500" width="14" height="11" fill="none" stroke="#aaa"/><rect x=".5" y="5.500" width="14" height="12" fill="#fff" stroke="#aaa"/><path d="M.5 7.500h14M5.500 3h14" stroke="#aaa"/></svg>
        <svg class="i m20" width="18" height="18" viewBox="0 0 18 18"><path d="M1 1l16 16M17 1 1 17" stroke="#aaa" stroke-width="1.600"/></svg>
      </div>
    </div>

    <div class="crumb">
      <svg width="18" height="18"><use href="#part"/></svg>
      <svg class="cr-p" width="14" height="18"><use href="#plane"/></svg>
      <span>正面</span>
    </div>

    <div class="rtabs">
      <div class="rt-i rt-on"><svg width="36" height="34" viewBox="0 0 36 34"><path d="M7 18v12h22V18" fill="#fff" stroke="#333"/><path d="M2 17 18 3l16 14" fill="none" stroke="#2d6d92" stroke-width="2.500"/></svg></div>
      <div class="rt-i"><svg width="36" height="34" viewBox="0 0 36 34"><path d="M4 8l8-4 16 4v18l-16 5-8-4Z" fill="#eee" stroke="#555"/><path d="M8 6v22M12 4v27" stroke="#555"/></svg></div>
      <div class="rt-i"><svg width="36" height="34" viewBox="0 0 36 34"><path d="M4 30V5h10l3 3h15v22Z" fill="#e8e8e8" stroke="#444"/><path d="M4 30l10-16h20l-6 16Z" fill="#fff" stroke="#444"/></svg></div>
      <div class="rt-i"><svg width="36" height="34" viewBox="0 0 36 34"><rect x="6" y="3" width="28" height="28" fill="#fff" stroke="#333"/><path d="M9 7h22v7H9ZM14 16h6v6h11v6H9v-6h5Z" fill="#eec21f" stroke="#7d5f10"/></svg></div>
      <div class="rt-i"><svg width="36" height="34" viewBox="0 0 36 34"><circle cx="20" cy="17" r="13" fill="#3c78c8"/><path d="M7 17c4 3 22 3 26 0a13 13 0 0 1-26 0Z" fill="#4aa83a"/><circle cx="20" cy="17" r="13" fill="url(#gShine)"/></svg></div>
      <div class="rt-i"><svg width="36" height="34" viewBox="0 0 36 34"><rect x="6" y="4" width="28" height="27" fill="#fff" stroke="#333"/><rect x="6" y="4" width="28" height="4" fill="#3f8fbd"/><path d="M10 11h6v4h-6ZM10 17h6v4h-6ZM10 23h6v4h-6Z" fill="#4d9cc9" stroke="#23566f"/></svg></div>
    </div>
  </section>
</div>

<div class="btabs">
  <div class="b-left"><span class="b-rail"></span></div>
  <div class="b-area">
    <div class="nav">
      <span class="navb"><i class="ng ng1"></i></span><span class="navb"><i class="ng ng2"></i></span><span class="navb"><i class="ng ng3"></i></span><span class="navb"><i class="ng ng4"></i></span>
    </div>
    <span class="bt bt-on">ﾓﾃﾞﾙ</span>
    <span class="bt bt-2">3D ﾋﾞｭｰ</span>
    <span class="bt bt-3">ﾓｰｼｮﾝ ｽﾀﾃﾞｨ 1</span>
  </div>
</div>

<footer class="status">
  <div class="s-main">
    <div class="s-black"><span class="s-rail"></span></div>
    <div class="s-cells">
      <span class="s-sep"></span>
      <span class="s-edit">編集中： 部品</span>
      <span class="s-sep s-sep2"></span>
      <span class="s-unit">MMGS</span>
      <span class="s-up"></span>
    </div>
  </div>
  <div class="s-lines"><span class="s-ll"></span><span class="s-ld"></span></div>
</footer>
</body>
</html>
```

FILE: styles.css
```css
* { box-sizing: border-box; }
html, body { margin: 0; padding: 0; }
body {
  width: 1730px;
  height: 1079px;
  overflow: hidden;
  background: #fff;
  color: #000;
  font-family: "Noto Sans CJK JP", "Noto Sans", sans-serif;
  display: flex;
  flex-direction: column;
}
.defs { position: absolute; }
svg { display: block; flex: none; overflow: visible; }
.h { fill: #fff; stroke: #333; stroke-width: 1; }

.m2 { margin-left: 2px; } .m3 { margin-left: 3px; } .m4 { margin-left: 4px; }
.m6 { margin-left: 6px; } .m7 { margin-left: 7px; } .m8 { margin-left: 8px; }
.m9 { margin-left: 9px; } .m10 { margin-left: 10px; } .m11 { margin-left: 11px; }
.m12 { margin-left: 12px; } .m13 { margin-left: 13px; } .m14 { margin-left: 14px; }
.m15 { margin-left: 15px; } .m16 { margin-left: 16px; } .m17 { margin-left: 17px; }
.m20 { margin-left: 20px; } .m21 { margin-left: 21px; } .m27 { margin-left: 27px; }

/* caret */
.c {
  display: block;
  flex: none;
  width: 10px;
  height: 4px;
  background: #333;
  clip-path: polygon(1px 0, 9px 0, 5px 4px);
}
.cg { background: #9a9a9a; }
.cs { width: 6px; height: 3px; clip-path: polygon(0 0, 6px 0, 3px 3px); margin-left: 6px; }

/* top row */
.top { display: flex; height: 47px; background: #f7f7f7; flex: none; border-bottom: 1px solid #8a8a8a; }
.logo {
  width: 28px;
  height: 46px;
  background: #e6e6e6;
  border-right: 1px solid #9a9a9a;
  overflow: hidden;
  display: flex;
  align-items: center;
  justify-content: flex-end;
  padding-right: 7px;
}
.logo-t { font: 19px "Liberation Sans", sans-serif; color: #e0362c; letter-spacing: 1px; white-space: nowrap; }
.menu {
  width: 612px;
  height: 47px;
  display: grid;
  grid-template-columns: 65px 62px 63px 57px 61px 95px 83px 75px 14px;
  align-items: center;
  font-size: 15px;
  padding-left: 27px;
  padding-bottom: 3px;
  border-right: 1px solid #8a8a8a;
  border-bottom: 1px solid #111;
  white-space: nowrap;
}
.mi-s { font: 13.500px "Noto Sans", sans-serif; }

.tools { display: flex; align-items: center; flex: none; }
.t1 { height: 46px; width: 1090px; overflow: hidden; }
.t2 { height: 45px; background: #f7f7f7; width: 1730px; overflow: hidden; padding-bottom: 4px; flex: none; }

.sel-tool { display: flex; height: 38px; width: 51px; flex: none; }
.sel-main {
  width: 38px;
  background: #b2b2b2;
  border: 1px solid #8a8a8a;
  display: flex;
  align-items: center;
  justify-content: center;
}
.sel-drop {
  width: 13px;
  border: 1px solid #a8a8a8;
  border-left: 0;
  display: flex;
  align-items: center;
  justify-content: center;
}
.sel-drop .c { width: 9px; }

.doc { margin-left: 42px; width: 100px; flex: none; font: 14px "Noto Sans", sans-serif; letter-spacing: -.1px; white-space: nowrap; margin-top: -2px; }
.star { color: #333; }
.search {
  margin-left: 40px;
  width: 202px;
  height: 24px;
  flex: none;
  background: #eceef2;
  border: 1px solid #222;
  display: flex;
  align-items: center;
  padding: 0 6px;
}
.search-t { font-size: 13.500px; color: #666; margin-left: 5px; flex: 1; white-space: nowrap; }
.help { margin-left: 19px; width: 14px; flex: none; font: bold 25px "Liberation Sans", sans-serif; color: #333; line-height: 1; }
.bar16 { display: block; width: 16px; height: 3px; margin-top: 20px; background: #444; flex: none; }
.bar-g { background: #aaa; margin-top: 22px; }

.hnd { width: 3px; height: 3px; border: 1px solid #333; margin-top: -12px; flex: none; }
.act {
  width: 39px;
  height: 38px;
  flex: none;
  background: #b2b2b2;
  border: 1px solid #8a8a8a;
  display: flex;
  align-items: center;
  justify-content: center;
}
.act2 {
  width: 37px;
  height: 38px;
  flex: none;
  border: 1px solid #bdbdbd;
  background: #fff;
  display: flex;
  align-items: center;
  justify-content: center;
}
.grip {
  width: 5px;
  height: 40px;
  flex: none;
  background-image: radial-gradient(circle, #999 1.2px, transparent 1.5px);
  background-size: 5px 5px;
}
.vsep { width: 1px; height: 42px; background: #888; flex: none; }
.bigA { font: 34px "Liberation Serif", serif; fill: #fff; stroke: #2d6d92; stroke-width: 1.200; }
.abc { font: 12px "Noto Sans", sans-serif; fill: #222; }
.sigma { font: bold 34px "Liberation Sans", sans-serif; fill: #222; }
.fa { font: bold 12px "Liberation Serif", serif; fill: #2f7fb5; }
.vA { font: bold 17px "Liberation Serif", serif; fill: #7fb2cd; stroke: #2d6d92; stroke-width: .5; }

/* main */
.main { display: flex; height: 948px; flex: none; background: #fff; }
.strip {
  width: 24px;
  flex: none;
  background: #f7f7f7;
  display: flex;
  flex-direction: column;
  overflow: hidden;
  font-size: 14px;
  line-height: 20px;
  white-space: nowrap;
}
.st-a { margin-top: 21px; height: 20px; }
.st-b { margin-top: 18px; height: 20px; }
.st-c { margin-top: 94px; height: 20px; color: #bbb; }
.st-l { display: block; height: 1px; background: #c8c8c8; flex: none; }
.st-l1 { margin-top: 13px; }
.st-k1 { margin: 56px 0 0 11px; }
.st-l2 { margin-top: 172px; }
.st-k2 { margin: 18px 0 0 11px; }
.st-k3 { margin: 34px 0 0 11px; }
.st-l3 { margin-top: 248px; }
.st-k4 { margin: 18px 0 0 11px; }
.st-k5 { margin: 34px 0 0 11px; }
.st-l4 { margin-top: 20px; }

.vcol { width: 23px; flex: none; display: flex; flex-direction: column; background: #f7f7f7; }
.vt {
  flex: none;
  display: flex;
  align-items: flex-end;
  justify-content: center;
  border: 1px solid #8a8a8a;
  border-top: 0;
  background: #d6d6d6;
  font-size: 12px;
  line-height: 1;
  padding: 0 2px 2px 0;
}
.vt span { writing-mode: sideways-lr; white-space: nowrap; }
.vt-a { height: 62px; background: #f7f7f7; border-left-color: transparent; border-bottom-color: transparent; font-size: 13px; }
.vt-b { height: 56px; border-top: 1px solid #8a8a8a; }
.vt-c { height: 74px; }
.vt-d { height: 138px; }
.vfill { flex: 1; border-left: 1px solid #8a8a8a; }

.panel {
  position: relative;
  z-index: 2;
  width: 282px;
  flex: none;
  background: #f7f7f7;
  border-right: 1px solid #8a8a8a;
  display: flex;
  flex-direction: column;
  padding-right: 1px;
}
.pgrip {
  height: 16px;
  margin-top: 2px;
  flex: none;
  border-top: 1px solid #c8c8c8;
  border-bottom: 1px solid #c8c8c8;
  display: flex;
  align-items: center;
  justify-content: center;
}
.dot { display: block; width: 6px; height: 6px; border-radius: 50%; background: #cfcfcf; border: 1px solid #999; }
.ptabs { display: flex; height: 38px; margin-top: 4px; flex: none; align-items: stretch; }
.ptab {
  width: 52px;
  flex: none;
  background: #d3d3d3;
  border: 1px solid #8a8a8a;
  border-left: 0;
  display: flex;
  align-items: center;
  justify-content: center;
}
.ptab.on { background: #f7f7f7; border-bottom: 0; border-left: 0; }
.pmore { margin: 13px 0 0 8px; }
.pfilter {
  height: 25px;
  flex: none;
  margin: 0 1px 0 3px;
  border: 1px solid #dcdcdc;
  border-top: 0;
  padding: 2px 0 0 2px;
}
.tree { flex: 1; margin-top: 2px; overflow: hidden; }
.row { display: flex; height: 22px; white-space: nowrap; overflow: hidden; font-size: 15px; }
.tw { width: 22px; flex: none; display: flex; align-items: center; }
.tw-part { margin-left: 3px; }
.twa {
  display: block;
  margin-left: 8px;
  border-left: 5px solid #666;
  border-top: 4px solid transparent;
  border-bottom: 4px solid transparent;
}
.rb {
  display: flex;
  align-items: center;
  gap: 4px;
  border: 1px solid transparent;
  padding: 0 3px 0 2px;
  height: 22px;
  flex: none;
}
.sel { background: #a9c9e2; border-color: #4a8dbf; }
.rt { line-height: 20px; letter-spacing: .4px; }
.rt-d { letter-spacing: 0; }
.rt-cfg { letter-spacing: .75px; }
.rollback { height: 3px; background: #1f52c4; border-bottom: 1px solid #142a6a; }
.hscroll {
  height: 15px;
  margin-bottom: 2px;
  flex: none;
  display: flex;
  align-items: center;
  padding: 0 2px 0 3px;
}
.thumb { width: 226px; height: 15px; background: #cbcbcb; margin: 0 28px 0 5px; flex: none; }
.phandle {
  position: absolute;
  right: -10px;
  top: 454px;
  width: 10px;
  height: 39px;
  background: #f7f7f7;
  border: 1px solid #8a8a8a;
  border-left: 0;
  display: flex;
  align-items: center;
  padding-left: 1px;
}

.view { position: relative; flex: 1; overflow: hidden; background: #fff; }
.model { position: absolute; left: 0; top: 0; }
.pl { font-family: "Noto Sans CJK JP", sans-serif; font-weight: 700; font-size: 16px; stroke-width: .4px; }
.pl-f { fill: #6db3f5; stroke: #6db3f5; }
.pl-t { fill: #2a2aee; stroke: #2a2aee; font-size: 17px; }
.pl-r { fill: #2a2aee; stroke: #2a2aee; }
.ax { font: 11px "Liberation Sans", sans-serif; }
.ax-y { fill: #1f8a1f; }
.ax-z { fill: #1010e0; }
.ax-x { fill: #ee2020; }

.vbar {
  position: relative;
  display: flex;
  align-items: center;
  height: 35px;
  margin-top: 5px;
  padding-left: 469px;
}
.wbtns { display: flex; align-items: center; margin-left: auto; margin-right: -3px; }
.crumb {
  position: absolute;
  left: 14px;
  top: 39px;
  width: 105px;
  height: 24px;
  background: linear-gradient(90deg, #eef2f6 0, #eef2f6 36px, #d2e3f0 36px, #d2e3f0 100%);
  border: 1px solid #c4d4e2;
  display: flex;
  align-items: center;
  padding-left: 13px;
  font-size: 12px;
}
.cr-p { margin: 0 7px 0 15px; }
.rtabs { position: absolute; right: 0; top: 63px; width: 20px; overflow: hidden; }
.rt-i {
  height: 36px;
  background: #d6d6d6;
  border: 1px solid #8a8a8a;
  border-right: 0;
  border-top: 0;
  display: flex;
  align-items: center;
}
.rt-on { background: #f2f2f2; border-top: 1px solid #8a8a8a; }

/* bottom tabs */
.btabs { display: flex; height: 16px; flex: none; background: #f7f7f7; }
.b-left { width: 47px; flex: none; }
.b-rail { display: block; width: 1px; height: 16px; background: #8a8a8a; margin-left: 24px; }
.b-area {
  flex: 1;
  display: flex;
  border-top: 1px solid #8a8a8a;
  border-bottom: 1px solid #8a8a8a;
  font-size: 14px;
  line-height: 14px;
  white-space: nowrap;
}
.nav { width: 66px; flex: none; display: flex; background: #b4b4b4; border-right: 1px solid #8a8a8a; padding: 1px; gap: 1px; }
.navb { flex: 1; background: #a8a8a8; border: 1px solid #9a9a9a; display: flex; align-items: center; justify-content: center; }
.ng { display: block; width: 7px; height: 9px; }
.ng1, .ng2 { border-right: 6px solid #8a8a8a; border-top: 4px solid transparent; border-bottom: 4px solid transparent; border-left: 0; }
.ng3, .ng4 { border-left: 6px solid #8a8a8a; border-top: 4px solid transparent; border-bottom: 4px solid transparent; border-right: 0; }
.bt { display: flex; justify-content: center; border-right: 1px solid #8a8a8a; flex: none; }
.bt-on { width: 52px; background: #f7f7f7; }
.bt-2 { width: 65px; background: #cdcdcd; }
.bt-3 { width: 113px; background: #cdcdcd; }

/* status */
.status { flex: 1; display: flex; flex-direction: column; background: #f7f7f7; }
.s-main { display: flex; flex: 1; min-height: 0; }
.s-black { width: 47px; background: #000; margin-top: 1px; flex: none; }
.s-rail { display: block; width: 1px; height: 100%; background: #8a8a8a; margin-left: 24px; }
.s-cells { flex: 1; display: flex; align-items: stretch; padding-left: 1367px; font-size: 16px; }
.s-sep { width: 9px; flex: none; border-left: 1px solid #d2d2d2; border-right: 1px solid #d2d2d2; margin-top: 1px; }
.s-sep2 { width: 17px; }
.s-edit { width: 109px; padding-left: 4px; line-height: 23px; white-space: nowrap; }
.s-unit { font: 15.500px/24px "Noto Sans", sans-serif; width: 112px; padding-left: 37px; flex: none; }
.s-up { width: 0; height: 0; margin-top: 10px; border-left: 3px solid transparent; border-right: 3px solid transparent; border-bottom: 3px solid #333; box-sizing: content-box; }
.s-lines { display: flex; height: 1px; flex: none; }
.s-ll { width: 165px; background: #c4c4c4; }
.s-ld { flex: 1; background: #22304a; }
```
